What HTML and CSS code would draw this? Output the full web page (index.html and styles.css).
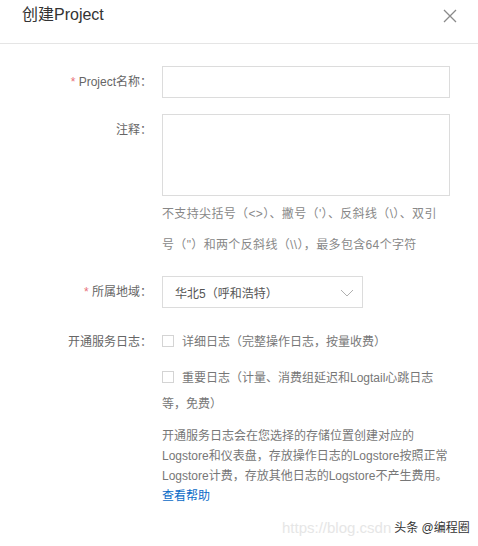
FILE: index.html
```html
<!DOCTYPE html>
<html lang="zh">
<head>
<meta charset="utf-8">
<title>创建Project</title>
<link rel="stylesheet" href="styles.css">
</head>
<body>
<div class="dialog">
  <header class="head">
    <h1 class="title">创建Project</h1>
    <svg class="close" width="14" height="14" viewBox="0 0 14 14"><path d="M1 1L13 13M13 1L1 13" stroke="#8a8a8a" stroke-width="1.3" fill="none"/></svg>
  </header>
  <form class="form">
    <div class="row r-name">
      <label class="label"><span class="req">*</span> Project名称：</label>
      <div class="field"><input class="input" type="text"></div>
    </div>
    <div class="row r-note">
      <label class="label">注释：</label>
      <div class="field">
        <textarea class="textarea"></textarea>
        <p class="hint">不支持尖括号（&lt;&gt;）、撇号（'）、反斜线（\）、双引<br>号（"）和两个反斜线（\\），最多包含64个字符</p>
      </div>
    </div>
    <div class="row r-region">
      <label class="label"><span class="req">*</span> 所属地域：</label>
      <div class="field">
        <div class="select">
          <span>华北5（呼和浩特）</span>
          <svg class="chev" width="14" height="8" viewBox="0 0 14 8"><path d="M1 1L7 7L13 1" stroke="#b0b0b0" stroke-width="1" fill="none"/></svg>
        </div>
      </div>
    </div>
    <div class="row r-log">
      <label class="label">开通服务日志：</label>
      <div class="field">
        <div class="check c1"><span class="box"></span>详细日志（完整操作日志，按量收费）</div>
        <div class="check c2"><span class="box"></span>重要日志（计量、消费组延迟和Logtail心跳日志<br>等，免费）</div>
        <p class="desc">开通服务日志会在您选择的存储位置创建对应的<br>Logstore和仪表盘，存放操作日志的Logstore按照正常<br>Logstore计费，存放其他日志的Logstore不产生费用。<br><a class="link" href="#">查看帮助</a></p>
      </div>
    </div>
  </form>
  <div class="mark"><span class="url">https://blog.csdn</span><span class="src">头条 @编程圈</span></div>
</div>
</body>
</html>
```
FILE: styles.css
```css
* { box-sizing: border-box; }
html, body { margin: 0; padding: 0; background: #fff; }
body {
  font-family: "Liberation Sans", "Noto Sans CJK TC", sans-serif;
  font-size: 12px;
  color: #666;
  width: 478px;
  height: 546px;
  overflow: hidden;
}
.dialog { position: relative; height: 546px; }
.head {
  height: 44px;
  border-bottom: 1px solid #e5e5e5;
  display: flex;
  align-items: flex-start;
  justify-content: space-between;
  padding: 0 21px 0 22px;
}
.title {
  margin: 0;
  font-size: 16px;
  font-weight: normal;
  color: #333;
  line-height: 30px;
}
.close { margin-top: 9px; }
.form { padding-top: 22px; }
.row {
  display: grid;
  grid-template-columns: 152px 288px;
  column-gap: 10px;
}
.label {
  text-align: right;
  line-height: 32px;
  color: #666;
  white-space: nowrap;
}
.req { color: #e8707a; }
.input {
  display: block;
  width: 288px;
  height: 32px;
  border: 1px solid #dcdcdc;
  margin: 0;
  padding: 0 10px;
  outline: none;
}
.r-note { margin-top: 16px; }
.textarea {
  display: block;
  width: 288px;
  height: 82px;
  border: 1px solid #dcdcdc;
  margin: 0;
  resize: none;
  outline: none;
}
.hint {
  margin: 3px 0 0;
  line-height: 31px;
  color: #888;
  white-space: nowrap;
  letter-spacing: 0.35px;
}
.r-region { margin-top: 15px; }
.select {
  width: 201px;
  height: 32px;
  border: 1px solid #dcdcdc;
  display: flex;
  align-items: center;
  justify-content: space-between;
  padding: 0 8px 0 12px;
  color: #555;
}
.chev { display: block; margin-top: 1px; }
.r-log { margin-top: 18px; }
.check {
  line-height: 26px;
  color: #777;
  white-space: nowrap;
}
.c1 { margin-top: 3px; }
.c2 { margin-top: 10px; }
.box {
  display: inline-block;
  width: 12px;
  height: 12px;
  border: 1px solid #d4d4d4;
  vertical-align: -1px;
  margin-right: 8px;
}
.desc {
  margin: 9px 0 0;
  line-height: 20px;
  color: #777;
  white-space: nowrap;
}
.link { color: #0a6bc7; text-decoration: none; }
.mark {
  position: absolute;
  left: 282px;
  top: 518px;
  display: flex;
  align-items: center;
  white-space: nowrap;
  line-height: 20px;
}
.url {
  font-size: 15px;
  color: #e6e6e6;
}
.src {
  font-size: 12px;
  color: #333;
  margin-left: 3px;
}
```
